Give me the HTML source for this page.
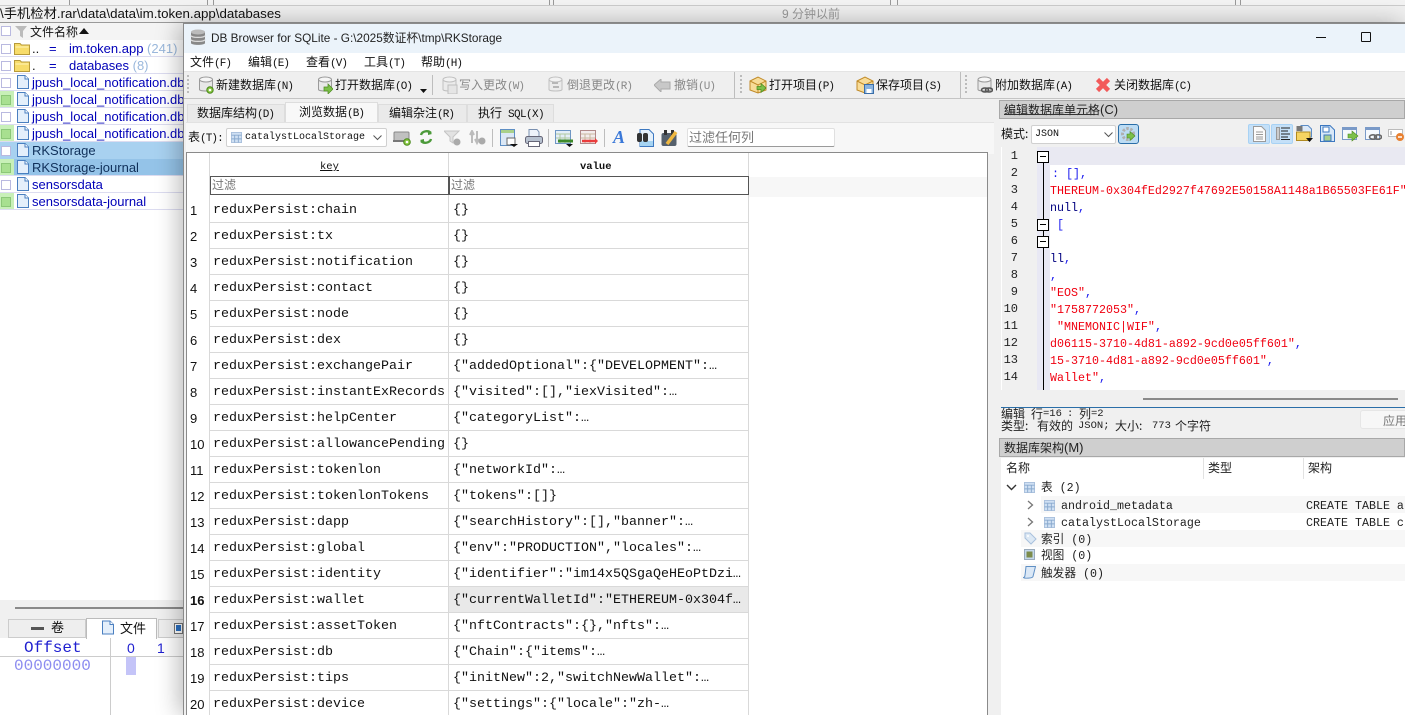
<!DOCTYPE html>
<html><head><meta charset="utf-8">
<style>
*{box-sizing:border-box}
html,body{margin:0;padding:0;width:1405px;height:715px;overflow:hidden;background:#fff}
body{position:relative;font:12px/14px "Liberation Sans","Noto Sans CJK SC",sans-serif;color:#111}
div,span.a,svg{position:absolute}
.t{white-space:nowrap;line-height:14px}
i{font:normal 11px "Liberation Mono",monospace;letter-spacing:-.9px}
.ui{font-family:"Noto Sans CJK SC",sans-serif;font-size:12px}
.dis{color:#888}
.f{left:32px;font:13px/17px "Liberation Sans",sans-serif;color:#0000b8;white-space:nowrap}
.cb{left:1px;width:10px;height:10px;border:1px solid #b9b9e0;background:#fff}
.rn{left:190px;font:13px/28px "Liberation Sans",sans-serif;color:#111}
.k,.v{font:13.33px/30px "Liberation Mono",monospace;white-space:pre;color:#111}
.k{left:213px}.v{left:453px}
.hl{left:210px;width:539px;height:1px;background:#d9d9d9}
.ln{left:1002px;width:16px;text-align:right;font:12px/19px "Liberation Mono",monospace;color:#222}
.c{left:1050px;font:11.67px/21px "Liberation Mono",monospace;white-space:pre}
.red{color:#f00010}.blue{color:#1a1aee}.navy{color:#00007f}
.sch{font:11.67px/19px "Liberation Mono","Noto Sans CJK SC",monospace;white-space:pre;color:#222}
.box{width:12px;height:12px;border:1px solid #000;background:#fff;left:1037px}
.box:after{content:"";position:absolute;left:2px;top:4px;width:6px;height:1px;background:#000}
.sep{width:1px;background:#bdbdbd}
.dock{left:999px;width:406px;height:19px;background:#cfcfcf;border:1px solid #a8a8a8;font:12px/17px "Noto Sans CJK SC",sans-serif;padding-left:4px;color:#222}
.dock b{font:13px/17px "Liberation Sans",sans-serif}
.st{font-family:"Noto Sans CJK SC",sans-serif;font-size:12px;white-space:nowrap;line-height:14px;color:#222}
.st.m{font:10.5px/14px "Liberation Mono",monospace}
</style></head><body>

<svg width="0" height="0" style="left:0;top:0">
<defs>
<symbol id="fi" viewBox="0 0 12 14"><path d="M.5.5H8L11.500 4V13.500H.5Z" fill="#e4effb" stroke="#4a7fc0"/><path d="M8 .5V4H11.500" fill="#fff" stroke="#4a7fc0"/></symbol>
<symbol id="fo" viewBox="0 0 16 14"><path d="M.5 2.500H6L7.500 4H15.500V13.500H.5Z" fill="#f7dc6a" stroke="#b79a3a"/><path d="M1.500 6H14.500" stroke="#fff5b8"/></symbol>
<symbol id="tb" viewBox="0 0 12 12"><rect x=".5" y=".5" width="11" height="11" fill="#cfe0f3" stroke="#a9c0dc"/><path d="M.5 3.500H11.500M4 3.500V11.500M8 3.500V11.500M.5 7.500H11.500" stroke="#89a9ce"/></symbol>
<symbol id="db" viewBox="0 0 16 18"><path d="M1.500 3.500V13.500C1.500 15.500 14.500 15.500 14.500 13.500V3.500" fill="#e8e8e8" stroke="#9a9a9a"/><ellipse cx="8" cy="3.500" rx="6.500" ry="2.500" fill="#f6f6f6" stroke="#9a9a9a"/></symbol>
</defs>
</svg>

<!-- background top strip -->
<div style="left:0;top:0;width:1405px;height:5px;background:#f3f3f3"></div>
<div style="left:69px;top:0;width:1px;height:5px;background:#999"></div>
<div style="left:207px;top:0;width:1px;height:5px;background:#999"></div>
<div style="left:213px;top:0;width:1px;height:5px;background:#999"></div>
<div style="left:549px;top:0;width:1px;height:5px;background:#999"></div>
<div style="left:553px;top:0;width:1px;height:5px;background:#999"></div>
<div style="left:890px;top:0;width:1px;height:5px;background:#999"></div>
<div style="left:897px;top:0;width:1px;height:5px;background:#999"></div>
<div style="left:1235px;top:0;width:1px;height:5px;background:#999"></div>
<div style="left:1240px;top:0;width:1px;height:5px;background:#999"></div>
<div style="left:0;top:5px;width:1405px;height:17px;background:#f0f0f0;border-top:1px solid #ccc"></div>
<div class="t" style="left:0;top:7px;font-size:13.300px;color:#111">\手机检材.rar\data\data\im.token.app\databases</div>
<div class="t" style="left:782px;top:7px;color:#999">9 分钟以前</div>
<div style="left:0;top:22px;width:1405px;height:1px;background:#9a9a9a"></div>

<!-- file list -->
<div style="left:0;top:23px;width:184px;height:17px;background:#f4f4f4"></div>
<div class="cb" style="top:26px;left:1px;width:10px;height:10px"></div>
<svg style="left:15px;top:25px" width="13" height="13"><path d="M0 1H12L8 6V13L5 11V6Z" fill="#bbb"/></svg>
<div class="t" style="left:30px;top:25px">文件名称</div>
<svg style="left:79px;top:28px" width="10" height="6"><path d="M0 6L5 0L10 6Z" fill="#111"/></svg>

<div style="left:0;top:142px;width:184px;height:17px;background:#a8d1f0"></div>
<div style="left:0;top:159px;width:184px;height:17px;background:#94c3e8"></div>
<div style="left:0;top:90px;width:14px;height:17px;background:#c8f0b8"></div>
<div style="left:0;top:124px;width:14px;height:17px;background:#c8f0b8"></div>
<div style="left:0;top:159px;width:14px;height:17px;background:#c8f0b8"></div>
<div style="left:0;top:193px;width:14px;height:17px;background:#c8f0b8"></div>
<div style="left:0;top:56px;width:184px;height:1px;background:#dcdcf0"></div>
<div style="left:0;top:73px;width:184px;height:1px;background:#dcdcf0"></div>
<div style="left:0;top:90px;width:184px;height:1px;background:#dcdcf0"></div>
<div style="left:0;top:107px;width:184px;height:1px;background:#dcdcf0"></div>
<div style="left:0;top:124px;width:184px;height:1px;background:#dcdcf0"></div>
<div style="left:0;top:141px;width:184px;height:1px;background:#dcdcf0"></div>
<div style="left:0;top:175px;width:184px;height:1px;background:#dcdcf0"></div>
<div style="left:0;top:192px;width:184px;height:1px;background:#dcdcf0"></div>
<div style="left:0;top:209px;width:184px;height:1px;background:#dcdcf0"></div>

<div class="cb" style="top:44px"></div><div class="cb" style="top:61px"></div>
<div class="cb" style="top:78px"></div><div class="cb" style="top:95px;background:#a8e090;border-color:#8cc878"></div>
<div class="cb" style="top:112px"></div><div class="cb" style="top:129px;background:#a8e090;border-color:#8cc878"></div>
<div class="cb" style="top:146px"></div><div class="cb" style="top:163px;background:#a8e090;border-color:#8cc878"></div>
<div class="cb" style="top:180px"></div><div class="cb" style="top:197px;background:#a8e090;border-color:#8cc878"></div>

<svg style="left:14px;top:41px" width="16" height="14"><use href="#fo"/></svg>
<svg style="left:14px;top:58px" width="16" height="14"><use href="#fo"/></svg>
<svg style="left:17px;top:75px" width="12" height="14"><use href="#fi"/></svg>
<svg style="left:17px;top:92px" width="12" height="14"><use href="#fi"/></svg>
<svg style="left:17px;top:109px" width="12" height="14"><use href="#fi"/></svg>
<svg style="left:17px;top:126px" width="12" height="14"><use href="#fi"/></svg>
<svg style="left:17px;top:143px" width="12" height="14"><use href="#fi"/></svg>
<svg style="left:17px;top:160px" width="12" height="14"><use href="#fi"/></svg>
<svg style="left:17px;top:177px" width="12" height="14"><use href="#fi"/></svg>
<svg style="left:17px;top:194px" width="12" height="14"><use href="#fi"/></svg>

<div class="f" style="top:40px;color:#111">..</div><div class="f" style="top:40px;left:49px">=</div>
<div class="f" style="top:40px;left:69px">im.token.app <span style="color:#9ab8dc">(241)</span></div>
<div class="f" style="top:57px;color:#111">.</div><div class="f" style="top:57px;left:49px">=</div>
<div class="f" style="top:57px;left:69px">databases <span style="color:#9ab8dc">(8)</span></div>
<div class="f" style="top:74px">jpush_local_notification.db</div>
<div class="f" style="top:91px">jpush_local_notification.db</div>
<div class="f" style="top:108px">jpush_local_notification.db</div>
<div class="f" style="top:125px">jpush_local_notification.db</div>
<div class="f" style="top:142px;color:#10305a">RKStorage</div>
<div class="f" style="top:159px;color:#10305a">RKStorage-journal</div>
<div class="f" style="top:176px">sensorsdata</div>
<div class="f" style="top:193px">sensorsdata-journal</div>

<!-- bottom left -->
<div style="left:0;top:600px;width:184px;height:18px;background:#f0f0f0"></div>
<div style="left:15px;top:607px;width:168px;height:2px;background:#8a8a8a"></div>
<div style="left:0;top:618px;width:184px;height:20px;background:#f0f0f0"></div>
<div style="left:8px;top:619px;width:78px;height:19px;background:#eee;border:1px solid #ccc"></div>
<div style="left:31px;top:627px;width:13px;height:3px;background:#555"></div>
<div class="t" style="left:51px;top:621px;font-size:13px">卷</div>
<div style="left:86px;top:618px;width:71px;height:21px;background:#fff;border:1px solid #bbb;border-bottom:0"></div>
<svg style="left:102px;top:620px" width="12" height="15"><use href="#fi"/></svg>
<div class="t" style="left:120px;top:622px;font-size:13px">文件</div>
<div style="left:158px;top:619px;width:26px;height:19px;background:#eee;border:1px solid #ccc"></div>
<div style="left:174px;top:623px;width:9px;height:11px;background:#fff;border:1px solid #777"></div>
<div style="left:176px;top:625px;width:5px;height:6px;background:#2a6fc0"></div>
<div class="t" style="left:24px;top:641px;font:16px/14px 'Liberation Mono',monospace;color:#2020d0">Offset</div>
<div class="t" style="left:127px;top:641px;font:14px/14px 'Liberation Sans',sans-serif;color:#2020d0">0</div>
<div class="t" style="left:157px;top:641px;font:14px/14px 'Liberation Sans',sans-serif;color:#2020d0">1</div>
<div style="left:110px;top:638px;width:1px;height:77px;background:#ccc"></div>
<div style="left:0;top:656px;width:184px;height:1px;background:#ccc"></div>
<div class="t" style="left:14px;top:659px;font:16px/14px 'Liberation Mono',monospace;color:#8c8cf0">00000000</div>
<div style="left:126px;top:657px;width:10px;height:18px;background:#c4c4f8"></div>

<!-- window -->
<div style="left:183px;top:23px;width:1222px;height:692px;background:#f0f0f0;border-left:1px solid #8a8a8a;border-top:1px solid #8a8a8a;box-shadow:-4px 0 22px rgba(0,0,0,.28)"></div>
<div style="left:184px;top:24px;width:1221px;height:29px;background:#ebf3fa"></div>
<svg style="left:190px;top:29px" width="16" height="17" viewBox="0 0 16 17"><path d="M1 3V14C1 16.500 15 16.500 15 14V3" fill="#888"/><ellipse cx="8" cy="3" rx="7" ry="2.500" fill="#bbb"/><path d="M1 6.500C1 9 15 9 15 6.500M1 10.500C1 13 15 13 15 10.500" stroke="#ddd" fill="none" stroke-width="1.200"/></svg>
<div class="t" style="left:211px;top:31px;font-size:11.800px;color:#222">DB Browser for SQLite - G:\2025数证杯\tmp\RKStorage</div>
<div style="left:1316px;top:37px;width:10px;height:1px;background:#111"></div>
<div style="left:1361px;top:32px;width:10px;height:10px;border:1px solid #111;border-radius:1px"></div>
<div style="left:184px;top:53px;width:1221px;height:18px;background:#fff"></div>
<div class="t ui" style="left:190px;top:55px">文件<i>(F)</i></div>
<div class="t ui" style="left:248px;top:55px">编辑<i>(E)</i></div>
<div class="t ui" style="left:306px;top:55px">查看<i>(V)</i></div>
<div class="t ui" style="left:364px;top:55px">工具<i>(T)</i></div>
<div class="t ui" style="left:421px;top:55px">帮助<i>(H)</i></div>

<!-- toolbar -->
<div style="left:184px;top:71px;width:1221px;height:28px;background:#efefef;border-top:1px solid #e4e4e4;border-bottom:1px solid #c4c4c4"></div>
<div style="left:187px;top:75px;width:2px;height:20px;background:repeating-linear-gradient(#bbb 0 2px,transparent 2px 4px)"></div>
<div style="left:740px;top:75px;width:2px;height:20px;background:repeating-linear-gradient(#bbb 0 2px,transparent 2px 4px)"></div>
<div style="left:965px;top:75px;width:2px;height:20px;background:repeating-linear-gradient(#bbb 0 2px,transparent 2px 4px)"></div>
<div class="sep" style="left:432px;top:75px;height:20px"></div>
<div class="sep" style="left:734px;top:72px;height:26px"></div>
<div class="sep" style="left:960px;top:72px;height:26px"></div>

<svg style="left:198px;top:76px" width="16" height="18"><use href="#db"/><circle cx="12" cy="14" r="3.200" fill="#86c440" stroke="#4b8a1c"/><circle cx="12" cy="14" r="1.300" fill="#fff"/></svg>
<div class="t ui" style="left:216px;top:78px">新建数据库<i>(N)</i></div>
<svg style="left:317px;top:76px" width="16" height="18"><use href="#db"/><path d="M7 11H11V8L16 13L11 18V15H7Z" fill="#7cc04a" stroke="#4b8a1c" stroke-width=".7"/></svg>
<div class="t ui" style="left:335px;top:78px">打开数据库<i>(O)</i></div>
<svg style="left:420px;top:89px" width="7" height="4"><path d="M0 0H7L3.500 4Z" fill="#111"/></svg>
<svg style="left:441px;top:76px" width="17" height="18" opacity=".55"><use href="#db"/><rect x="7" y="9" width="9" height="9" fill="#ddd" stroke="#999"/></svg>
<div class="t ui dis" style="left:459px;top:78px">写入更改<i>(W)</i></div>
<svg style="left:547px;top:76px" width="17" height="18" opacity=".55"><use href="#db"/><path d="M5 7H11M12 11H6" stroke="#888" stroke-width="2"/></svg>
<div class="t ui dis" style="left:567px;top:78px">倒退更改<i>(R)</i></div>
<svg style="left:654px;top:79px" width="17" height="13"><path d="M0 6L7 0V3H16V10H7V13Z" fill="#c8c8c8" stroke="#aaa"/></svg>
<div class="t ui dis" style="left:674px;top:78px">撤销<i>(U)</i></div>
<svg style="left:749px;top:76px" width="18" height="18"><path d="M1 5L9 1L17 5V14L9 17L1 14Z" fill="#f8dc98" stroke="#c08a28"/><path d="M1 5L9 9L17 5M9 9V17" stroke="#c08a28" fill="none"/><path d="M8 10.500H12V7.500L17 12L12 16.500V13.500H8Z" fill="#7cc04a" stroke="#4b8a1c" stroke-width=".7"/></svg>
<div class="t ui" style="left:769px;top:78px">打开项目<i>(P)</i></div>
<svg style="left:856px;top:76px" width="18" height="18"><path d="M1 5L9 1L17 5V14L9 17L1 14Z" fill="#f8dc98" stroke="#c08a28"/><path d="M1 5L9 9L17 5" stroke="#c08a28" fill="none"/><rect x="8.500" y="8.500" width="9" height="9" fill="#8ab4e0" stroke="#3a6ea8"/><rect x="10.500" y="13" width="5" height="4" fill="#fff"/></svg>
<div class="t ui" style="left:876px;top:78px">保存项目<i>(S)</i></div>
<svg style="left:976px;top:76px" width="17" height="18"><use href="#db"/><ellipse cx="9" cy="14" rx="3.500" ry="2" fill="none" stroke="#555" stroke-width="1.500"/><ellipse cx="13" cy="14" rx="3.500" ry="2" fill="none" stroke="#555" stroke-width="1.500"/></svg>
<div class="t ui" style="left:995px;top:78px">附加数据库<i>(A)</i></div>
<svg style="left:1095px;top:77px" width="16" height="16"><path d="M2.500 2.500L13.500 13.500M13.500 2.500L2.500 13.500" stroke="#f25a5a" stroke-width="4.500"/></svg>
<div class="t ui" style="left:1114px;top:78px">关闭数据库<i>(C)</i></div>

<!-- tabs -->
<div style="left:187px;top:104px;width:98px;height:19px;background:#eaeaea;border:1px solid #ddd"></div>
<div style="left:378px;top:104px;width:89px;height:19px;background:#eaeaea;border:1px solid #ddd"></div>
<div style="left:467px;top:104px;width:87px;height:19px;background:#eaeaea;border:1px solid #ddd"></div>
<div style="left:285px;top:102px;width:93px;height:21px;background:#f8f8f8;border:1px solid #ddd;border-bottom:0"></div>
<div class="t ui" style="left:197px;top:106px">数据库结构<i>(D)</i></div>
<div class="t ui" style="left:299px;top:105px">浏览数据<i>(B)</i></div>
<div class="t ui" style="left:389px;top:106px">编辑杂注<i>(R)</i></div>
<div class="t ui" style="left:478px;top:106px">执行<i style="margin-left:6px;letter-spacing:-.6px">SQL(X)</i></div>

<!-- browse toolbar -->
<div style="left:186px;top:122px;width:808px;height:32px;background:#f7f7f7;border-top:1px solid #e2e2e2"></div>
<div class="t ui" style="left:188px;top:130px">表<i>(T):</i></div>
<div style="left:226px;top:128px;width:161px;height:19px;background:#fff;border:1px solid #d0d0d0;border-radius:2px"></div>
<svg style="left:231px;top:132px" width="11" height="11"><use href="#tb"/></svg>
<div class="t" style="left:245px;top:131px;font:10px/14px 'Liberation Mono',monospace">catalystLocalStorage</div>
<svg style="left:373px;top:135px" width="9" height="6"><path d="M.5 .5L4.500 4.500L8.500 .5" fill="none" stroke="#555"/></svg>

<svg style="left:393px;top:130px" width="18" height="16"><rect x="1" y="2" width="15" height="9" rx="1" fill="#c0c0c0" stroke="#888"/><rect x="0" y="10" width="15" height="2" fill="#777"/><circle cx="14" cy="12" r="3.300" fill="#86c440" stroke="#4b8a1c"/><circle cx="14" cy="12" r="1.300" fill="#fff"/></svg>
<svg style="left:419px;top:129px" width="14" height="16" fill="none" stroke="#4c9a3a" stroke-width="2.400"><path d="M2 6C3 2 9 1 12 4"/><path d="M12 10C11 14 5 15 2 12"/><path d="M9 1L13 5L9 6Z M5 10L1 11L5 15Z" fill="#4c9a3a" stroke="none"/></svg>
<svg style="left:444px;top:130px" width="18" height="16"><path d="M0 1H15L9 7V13L6 11V7Z" fill="#e2e2e2" stroke="#c4c4c4"/><circle cx="13" cy="12" r="3.500" fill="#aaa"/></svg>
<svg style="left:469px;top:130px" width="18" height="16"><path d="M3 13V2M1 5L3 1L5 5M8 1V12M6 9L8 13L10 9" stroke="#bbb" stroke-width="2" fill="none"/><circle cx="13" cy="11" r="3.500" fill="#aaa"/></svg>
<div class="sep" style="left:492px;top:129px;height:18px"></div>
<svg style="left:500px;top:129px" width="18" height="18"><rect x=".5" y=".5" width="14" height="16" fill="#dbe8f6" stroke="#5f8fc4"/><rect x="1" y="1" width="13" height="3" fill="#a9d08a"/><rect x="7" y="9" width="8" height="7" fill="#fff" stroke="#666"/><path d="M10 15H18L14 18Z" fill="#111"/></svg>
<svg style="left:525px;top:129px" width="18" height="18"><path d="M4 .5H12L14 3V8H4Z" fill="#eef3fa" stroke="#7a90b0"/><rect x=".5" y="7.500" width="17" height="7" rx="2" fill="#b8c2d0" stroke="#667"/><rect x="3.500" y="12.500" width="11" height="5" fill="#fff" stroke="#667"/></svg>
<div class="sep" style="left:548px;top:129px;height:18px"></div>
<svg style="left:555px;top:130px" width="18" height="17"><rect x=".5" y=".5" width="15" height="13" fill="#e4eef8" stroke="#6e96c4"/><path d="M1 4H15M1 8H15M5 4V13M10 4V13" stroke="#b0c8a0"/><path d="M3 11H18" stroke="#3e8a2a" stroke-width="3"/><path d="M11 14H18L14.500 17Z" fill="#111"/></svg>
<svg style="left:580px;top:130px" width="18" height="17"><rect x=".5" y=".5" width="15" height="13" fill="#f3ecec" stroke="#b08a8a"/><path d="M1 4H15M1 8H15M5 4V13M10 4V13" stroke="#c8b8a0"/><path d="M2 11H16" stroke="#ea3c3c" stroke-width="2.500"/><path d="M15 8L18 11L15 14Z" fill="#ea3c3c"/></svg>
<div class="sep" style="left:604px;top:129px;height:18px"></div>
<div class="t" style="left:613px;top:127px;font:italic bold 18px/20px 'Liberation Serif',serif;color:#3a78d8">A</div>
<svg style="left:636px;top:129px" width="18" height="18"><path d="M4 .5H13L17.500 5V17.500H4Z" fill="#e4f0fb" stroke="#3d78c0"/><rect x="4" y="12" width="13" height="5" fill="#a6d4f2"/><rect x="1" y="4" width="5" height="9" rx="2" fill="#333"/><rect x="7" y="4" width="5" height="9" rx="2" fill="#333"/></svg>
<svg style="left:661px;top:129px" width="18" height="18"><rect x=".5" y="4" width="15" height="13" rx="2" fill="#55606c"/><rect x="3" y="1" width="3" height="5" fill="#333"/><rect x="10" y="1" width="3" height="5" fill="#333"/><path d="M6 15L15 3" stroke="#f0b840" stroke-width="3.500"/></svg>
<div style="left:687px;top:128px;width:148px;height:19px;background:#fff;border:1px solid #e0e0e0;border-bottom:1px solid #9a9a9a;border-radius:2px"></div>
<div class="t" style="left:689px;top:130px;font-size:13px;color:#777;font-family:'Noto Sans CJK SC',sans-serif">过滤任何列</div>

<!-- table -->
<div style="left:186px;top:152px;width:802px;height:563px;background:#fff;border:1px solid #8a8a8a;border-bottom:0"></div>
<div style="left:209px;top:153px;width:1px;height:562px;background:#d9d9d9"></div>
<div style="left:448px;top:153px;width:1px;height:562px;background:#d9d9d9"></div>
<div style="left:748px;top:153px;width:1px;height:562px;background:#d9d9d9"></div>
<div style="left:749px;top:177px;width:238px;height:20px;background:#f7f7f7"></div>
<div class="t" style="left:320px;top:160px;font:10.500px/14px 'Liberation Mono',monospace;text-decoration:underline">key</div>
<div class="t" style="left:580px;top:160px;font:bold 10.500px/14px 'Liberation Mono',monospace">value</div>
<div style="left:210px;top:176px;width:239px;height:19px;background:#fff;border:1px solid #555"></div>
<div style="left:449px;top:176px;width:300px;height:19px;background:#fff;border:1px solid #555"></div>
<div class="t" style="left:212px;top:178px;font-size:12px;color:#777;font-family:'Noto Sans CJK SC',sans-serif">过滤</div>
<div class="t" style="left:451px;top:178px;font-size:12px;color:#777;font-family:'Noto Sans CJK SC',sans-serif">过滤</div>
<div style="left:449px;top:587px;width:299px;height:25px;background:#e9e9e9"></div>

<div class="hl" style="top:222px"></div><div class="hl" style="top:248px"></div><div class="hl" style="top:274px"></div><div class="hl" style="top:300px"></div><div class="hl" style="top:326px"></div><div class="hl" style="top:352px"></div><div class="hl" style="top:378px"></div><div class="hl" style="top:404px"></div><div class="hl" style="top:430px"></div><div class="hl" style="top:456px"></div><div class="hl" style="top:482px"></div><div class="hl" style="top:508px"></div><div class="hl" style="top:534px"></div><div class="hl" style="top:560px"></div><div class="hl" style="top:586px"></div><div class="hl" style="top:612px"></div><div class="hl" style="top:638px"></div><div class="hl" style="top:664px"></div><div class="hl" style="top:690px"></div>

<div class="rn" style="top:197px">1</div><div class="k" style="top:196px">reduxPersist:chain</div><div class="v" style="top:196px">{}</div>
<div class="rn" style="top:223px">2</div><div class="k" style="top:222px">reduxPersist:tx</div><div class="v" style="top:222px">{}</div>
<div class="rn" style="top:249px">3</div><div class="k" style="top:248px">reduxPersist:notification</div><div class="v" style="top:248px">{}</div>
<div class="rn" style="top:275px">4</div><div class="k" style="top:274px">reduxPersist:contact</div><div class="v" style="top:274px">{}</div>
<div class="rn" style="top:301px">5</div><div class="k" style="top:300px">reduxPersist:node</div><div class="v" style="top:300px">{}</div>
<div class="rn" style="top:327px">6</div><div class="k" style="top:326px">reduxPersist:dex</div><div class="v" style="top:326px">{}</div>
<div class="rn" style="top:353px">7</div><div class="k" style="top:352px">reduxPersist:exchangePair</div><div class="v" style="top:352px">{"addedOptional":{"DEVELOPMENT":…</div>
<div class="rn" style="top:379px">8</div><div class="k" style="top:378px">reduxPersist:instantExRecords</div><div class="v" style="top:378px">{"visited":[],"iexVisited":…</div>
<div class="rn" style="top:405px">9</div><div class="k" style="top:404px">reduxPersist:helpCenter</div><div class="v" style="top:404px">{"categoryList":…</div>
<div class="rn" style="top:431px">10</div><div class="k" style="top:430px">reduxPersist:allowancePending</div><div class="v" style="top:430px">{}</div>
<div class="rn" style="top:457px">11</div><div class="k" style="top:456px">reduxPersist:tokenlon</div><div class="v" style="top:456px">{"networkId":…</div>
<div class="rn" style="top:483px">12</div><div class="k" style="top:482px">reduxPersist:tokenlonTokens</div><div class="v" style="top:482px">{"tokens":[]}</div>
<div class="rn" style="top:509px">13</div><div class="k" style="top:508px">reduxPersist:dapp</div><div class="v" style="top:508px">{"searchHistory":[],"banner":…</div>
<div class="rn" style="top:535px">14</div><div class="k" style="top:534px">reduxPersist:global</div><div class="v" style="top:534px">{"env":"PRODUCTION","locales":…</div>
<div class="rn" style="top:561px">15</div><div class="k" style="top:560px">reduxPersist:identity</div><div class="v" style="top:560px">{"identifier":"im14x5QSgaQeHEoPtDzi…</div>
<div class="rn" style="top:587px;font-weight:bold">16</div><div class="k" style="top:586px">reduxPersist:wallet</div><div class="v" style="top:586px">{"currentWalletId":"ETHEREUM-0x304f…</div>
<div class="rn" style="top:613px">17</div><div class="k" style="top:612px">reduxPersist:assetToken</div><div class="v" style="top:612px">{"nftContracts":{},"nfts":…</div>
<div class="rn" style="top:639px">18</div><div class="k" style="top:638px">reduxPersist:db</div><div class="v" style="top:638px">{"Chain":{"items":…</div>
<div class="rn" style="top:665px">19</div><div class="k" style="top:664px">reduxPersist:tips</div><div class="v" style="top:664px">{"initNew":2,"switchNewWallet":…</div>
<div class="rn" style="top:691px">20</div><div class="k" style="top:690px">reduxPersist:device</div><div class="v" style="top:690px">{"settings":{"locale":"zh-…</div>

<!-- right edit cell -->
<div class="dock" style="top:100px">编辑数据库单元格<b>(C)</b></div>
<div style="left:1004px;top:114px;width:91px;height:1px;background:#333"></div>
<div class="t ui" style="left:1001px;top:127px">模式:</div>
<div style="left:1031px;top:125px;width:85px;height:19px;background:#fff;border:1px solid #d0d0d0;border-radius:2px"></div>
<div class="t" style="left:1035px;top:128px;font:10px/14px 'Liberation Mono',monospace">JSON</div>
<svg style="left:1104px;top:132px" width="9" height="6"><path d="M.5 .5L4.500 4.500L8.500 .5" fill="none" stroke="#555"/></svg>
<div style="left:1118px;top:124px;width:21px;height:20px;background:#bcdcf4;border:1px solid #2a6ea8;border-radius:3px"></div>
<svg style="left:1120px;top:126px" width="17" height="17"><circle cx="8" cy="8" r="5.500" fill="none" stroke="#b0b0b0" stroke-width="3" stroke-dasharray="2.500 1.500"/><path d="M7 8H10V5.500L15 10L10 14.500V12H7Z" fill="#7cc04a" stroke="#4b8a1c" stroke-width=".6"/></svg>

<div style="left:1248px;top:124px;width:22px;height:20px;background:#c4e0f8;border:1px solid #a8d2f4;border-radius:2px"></div>
<div style="left:1271px;top:124px;width:22px;height:20px;background:#c4e0f8;border:1px solid #a8d2f4;border-radius:2px"></div>
<svg style="left:1253px;top:126px" width="13" height="16"><path d="M.5 .5H8.500L12.500 4.500V15.500H.5Z" fill="#fbfbfb" stroke="#9a9a9a"/><path d="M3 6H10M3 8.500H10M3 11H10M3 13H10" stroke="#999"/></svg>
<svg style="left:1276px;top:127px" width="14" height="13"><rect x=".5" y=".5" width="3" height="12" fill="#ccc" stroke="#999"/><path d="M5 1H14M5 4H12M5 7H14M5 10H12M5 12.500H14" stroke="#222"/></svg>
<svg style="left:1296px;top:125px" width="17" height="17"><path d="M5 .5H12L15.500 4V12H5Z" fill="#dbe9f8" stroke="#5b8cc6"/><rect x=".5" y="1" width="6" height="5" fill="#777"/><path d="M.5 7H14V15.500H.5Z" fill="#f5d462" stroke="#b08a20"/><path d="M10 13H17L13.500 17Z" fill="#111"/></svg>
<svg style="left:1320px;top:125px" width="15" height="17"><path d="M.5 .5H10L14.500 5V16.500H.5Z" fill="#d8e8f8" stroke="#3d78c0"/><rect x="3" y="2" width="6" height="5" fill="#fff" stroke="#3d78c0"/><rect x="4" y="10" width="7" height="6" fill="#a8d08a" stroke="#3d78c0"/></svg>
<svg style="left:1342px;top:127px" width="17" height="15"><rect x=".5" y=".5" width="14" height="12" fill="#f6f9fd" stroke="#7a9ac8"/><rect x="1" y="1" width="13" height="2" fill="#7a9ac8"/><path d="M6 7H10V4L16 9L10 14V11H6Z" fill="#7cc04a" stroke="#4b8a1c" stroke-width=".6"/></svg>
<svg style="left:1365px;top:127px" width="17" height="15"><rect x=".5" y=".5" width="14" height="12" fill="#f6f9fd" stroke="#7a9ac8"/><rect x="1" y="1" width="13" height="2" fill="#7a9ac8"/><ellipse cx="8" cy="10" rx="3.500" ry="2.200" fill="none" stroke="#666" stroke-width="1.600"/><ellipse cx="13" cy="10" rx="3.500" ry="2.200" fill="none" stroke="#666" stroke-width="1.600"/></svg>
<svg style="left:1388px;top:129px" width="17" height="13"><rect x=".5" y=".5" width="14" height="7" fill="#fff" stroke="#bbb"/><path d="M3 2V6" stroke="#999"/><circle cx="12" cy="8" r="4" fill="#e88030"/><path d="M10 8H14" stroke="#fff" stroke-width="1.500"/></svg>

<!-- editor -->
<div style="left:1001px;top:147px;width:404px;height:243px;background:#fff"></div>
<div style="left:1002px;top:147px;width:35px;height:243px;background:#f0f0f0"></div>
<div style="left:1037px;top:147px;width:13px;height:243px;background:#e8e8f4"></div>
<div style="left:1050px;top:147px;width:355px;height:18px;background:#e9e9f2"></div>
<div style="left:1043px;top:160px;width:1px;height:230px;background:#000"></div>
<div class="box" style="top:151px"></div><div class="box" style="top:219px"></div><div class="box" style="top:236px"></div>
<div class="ln" style="top:147px">1</div><div class="ln" style="top:164px">2</div><div class="ln" style="top:181px">3</div><div class="ln" style="top:198px">4</div><div class="ln" style="top:215px">5</div><div class="ln" style="top:232px">6</div><div class="ln" style="top:249px">7</div><div class="ln" style="top:266px">8</div><div class="ln" style="top:283px">9</div><div class="ln" style="top:300px">10</div><div class="ln" style="top:317px">11</div><div class="ln" style="top:334px">12</div><div class="ln" style="top:351px">13</div><div class="ln" style="top:368px">14</div>
<div class="c blue" style="top:164px;left:1052px">: [],</div>
<div class="c red" style="top:181px">THEREUM-0x304fEd2927f47692E50158A1148a1B65503FE61F"</div>
<div class="c" style="top:198px"><span class="navy">null</span><span class="blue">,</span></div>
<div class="c blue" style="top:215px"> [</div>
<div class="c" style="top:249px"><span class="navy">ll</span><span class="blue">,</span></div>
<div class="c blue" style="top:266px">,</div>
<div class="c" style="top:283px"><span class="red">"EOS"</span><span class="blue">,</span></div>
<div class="c" style="top:300px"><span class="red">"1758772053"</span><span class="blue">,</span></div>
<div class="c" style="top:317px"><span class="red"> "MNEMONIC|WIF"</span><span class="blue">,</span></div>
<div class="c" style="top:334px"><span class="red">d06115-3710-4d81-a892-9cd0e05ff601"</span><span class="blue">,</span></div>
<div class="c" style="top:351px"><span class="red">15-3710-4d81-a892-9cd0e05ff601"</span><span class="blue">,</span></div>
<div class="c" style="top:368px"><span class="red">Wallet"</span><span class="blue">,</span></div>
<div style="left:1001px;top:390px;width:404px;height:17px;background:#f0f0f0"></div>
<div style="left:1143px;top:398px;width:255px;height:2px;background:#8a8a8a"></div>
<div style="left:1001px;top:407px;width:404px;height:1px;background:#2a6ea8"></div>
<div class="st" style="left:1001px;top:407px">编辑</div>
<div class="st" style="left:1031px;top:407px">行</div>
<div class="st m" style="left:1043px;top:407px">=16</div>
<div class="st m" style="left:1067px;top:407px">:</div>
<div class="st" style="left:1079px;top:407px">列</div>
<div class="st m" style="left:1091px;top:407px">=2</div>
<div class="st" style="left:1001px;top:419px">类型:</div>
<div class="st" style="left:1037px;top:419px">有效的</div>
<div class="st m" style="left:1078px;top:419px">JSON;</div>
<div class="st" style="left:1115px;top:419px">大小:</div>
<div class="st m" style="left:1152px;top:419px">773</div>
<div class="st" style="left:1175px;top:419px">个字符</div>
<div style="left:1360px;top:410px;width:50px;height:19px;background:#f7f7f7;border:1px solid #e6e6e6;border-radius:3px"></div>
<div class="t ui" style="left:1383px;top:414px;color:#777">应用</div>

<!-- schema -->
<div class="dock" style="top:438px">数据库架构<b>(M)</b></div>
<div style="left:1001px;top:458px;width:404px;height:257px;background:#fff"></div>
<div class="t ui" style="left:1006px;top:461px;color:#222">名称</div>
<div class="t ui" style="left:1208px;top:461px;color:#222">类型</div>
<div class="t ui" style="left:1308px;top:461px;color:#222">架构</div>
<div style="left:1203px;top:458px;width:1px;height:21px;background:#e2e2e2"></div>
<div style="left:1303px;top:458px;width:1px;height:21px;background:#e2e2e2"></div>
<div style="left:1041px;top:496px;width:364px;height:17px;background:#f7f7f7"></div>
<div style="left:1021px;top:530px;width:384px;height:17px;background:#f7f7f7"></div>
<div style="left:1021px;top:564px;width:384px;height:17px;background:#f7f7f7"></div>
<svg style="left:1006px;top:484px" width="11" height="7"><path d="M1 1L5.500 5.500L10 1" fill="none" stroke="#333" stroke-width="1.400"/></svg>
<svg style="left:1027px;top:500px" width="7" height="10"><path d="M1 1L5.500 5L1 9" fill="none" stroke="#777" stroke-width="1.300"/></svg>
<svg style="left:1027px;top:517px" width="7" height="10"><path d="M1 1L5.500 5L1 9" fill="none" stroke="#777" stroke-width="1.300"/></svg>
<svg style="left:1024px;top:482px" width="11" height="11"><use href="#tb"/></svg>
<svg style="left:1044px;top:500px" width="11" height="11"><use href="#tb"/></svg>
<svg style="left:1044px;top:517px" width="11" height="11"><use href="#tb"/></svg>
<svg style="left:1024px;top:532px" width="13" height="13"><path d="M1 1H6L12 7L7 12L1 6Z" fill="#dce8f4" stroke="#a8c0dc"/><circle cx="4" cy="4" r="1" fill="#fff"/></svg>
<svg style="left:1024px;top:549px" width="11" height="11"><rect x=".5" y=".5" width="10" height="10" fill="#c4d8ec" stroke="#9ab"/><rect x="2.500" y="2.500" width="6" height="6" fill="#7c8c4c"/></svg>
<svg style="left:1023px;top:566px" width="13" height="13"><path d="M3 .5H12.500L10 10.500C9.500 12.500 1 12.500 .5 11.500C2 11.500 2 10 3 .5Z" fill="#dbe8f6" stroke="#5f8fc4"/></svg>
<div class="sch" style="top:479px;left:1041px">表 (2)</div>
<div class="sch" style="top:497px;left:1061px">android_metadata</div>
<div class="sch" style="top:514px;left:1061px">catalystLocalStorage</div>
<div class="sch" style="top:497px;left:1306px">CREATE TABLE a</div>
<div class="sch" style="top:514px;left:1306px">CREATE TABLE c</div>
<div class="sch" style="top:531px;left:1041px">索引 (0)</div>
<div class="sch" style="top:547px;left:1041px">视图 (0)</div>
<div class="sch" style="top:565px;left:1041px">触发器 (0)</div>

</body></html>
